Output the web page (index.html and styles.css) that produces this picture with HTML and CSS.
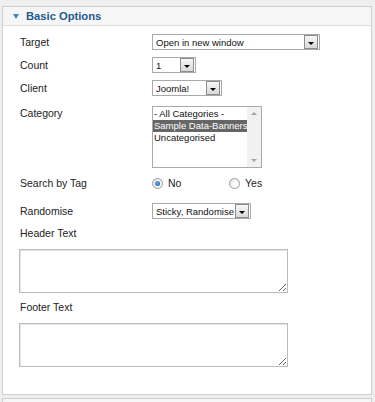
FILE: index.html
```html
<!DOCTYPE html>
<html>
<head>
    <title>Banners Module - Basic Options</title>
    <link rel="stylesheet" href="styles.css">
</head>
<body>
    <div class="panel">
        <h3 class="panel-title"><span class="caret"></span>Basic Options</h3>
        <div class="panel-body">
            <div class="row row-target">
                <label>Target</label>
                <span class="select w-target"><span class="value">Open in new window</span><span class="arrow"></span></span>
            </div>
            <div class="row row-short">
                <label>Count</label>
                <span class="select w-count"><span class="value">1</span><span class="arrow"></span></span>
            </div>
            <div class="row row-short">
                <label>Client</label>
                <span class="select w-client"><span class="value">Joomla!</span><span class="arrow"></span></span>
            </div>
            <div class="row row-category">
                <label class="top">Category</label>
                <div class="listbox">
                    <div class="options">
                        <div class="option">- All Categories -</div>
                        <div class="option selected">Sample Data-Banners</div>
                        <div class="option">Uncategorised</div>
                    </div>
                    <div class="scrollbar">
                        <span class="up"></span>
                        <span class="down"></span>
                    </div>
                </div>
            </div>
            <div class="row row-radio">
                <label>Search by Tag</label>
                <div class="radios">
                    <span class="radio-item no"><span class="radio checked"></span>No</span>
                    <span class="radio-item"><span class="radio"></span>Yes</span>
                </div>
            </div>
            <div class="row row-random">
                <label>Randomise</label>
                <span class="select w-random"><span class="value">Sticky, Randomise</span><span class="arrow"></span></span>
            </div>
            <label class="block-label">Header Text</label>
            <textarea class="text-box"></textarea>
            <label class="block-label">Footer Text</label>
            <textarea class="text-box"></textarea>
        </div>
    </div>
    <div class="panel next">
        <div class="panel-title"></div>
    </div>
</body>
</html>
```

FILE: styles.css
```css
body {
    margin: 0;
    padding: 6px 3px 0 2px;
    background: #efefef;
    font-family: 'Liberation Sans', Arial, sans-serif;
    color: #222;
    height: 402px;
    box-sizing: border-box;
    overflow: hidden;
}
.panel {
    background: #fff;
    border: 1px solid #cfcfcf;
}
.panel.next {
    margin-top: 3px;
    height: 20px;
}
.panel-title {
    margin: 0;
    height: 18px;
    display: flex;
    align-items: center;
    background: #f6f6f6;
    border-bottom: 1px solid #dedede;
    font-size: 11.2px;
    font-weight: bold;
    color: #1d5a93;
}
.caret {
    width: 0;
    height: 0;
    margin: 1px 7px 0 10px;
    border-left: 3.5px solid transparent;
    border-right: 3.5px solid transparent;
    border-top: 5px solid #3a88c6;
}
.panel-body {
    display: flex;
    flex-direction: column;
    align-items: flex-start;
    padding: 0 0 27px 17px;
}
.row {
    display: flex;
    align-items: center;
}
.row label {
    width: 132px;
    font-size: 10.5px;
}
.row label.top {
    align-self: flex-start;
    padding-top: 1px;
}
.row-target { margin-top: 8px; }
.row-short { margin-top: 7px; }
.row-category { margin-top: 10px; }
.row-radio { margin-top: 9px; height: 12px; }
.row-random { margin-top: 14px; }

/* dropdowns */
.select {
    display: inline-flex;
    align-items: center;
    height: 16px;
    box-sizing: border-box;
    border: 1px solid #a9a9a9;
    background: #fff;
    font-size: 9.5px;
    color: #111;
}
.select .value {
    flex: 1;
    padding-left: 3px;
    white-space: nowrap;
    overflow: hidden;
}
.select .arrow {
    width: 12px;
    height: 12px;
    margin-right: 1px;
    border: 1px solid #8c8c8c;
    background: linear-gradient(#f7f7f7, #d9d9d9);
    display: flex;
    align-items: center;
    justify-content: center;
}
.select .arrow::after {
    content: '';
    margin-top: 2px;
    border-left: 3px solid transparent;
    border-right: 3px solid transparent;
    border-top: 3px solid #000;
}
.w-target { width: 168px; }
.w-count { width: 44px; }
.w-client { width: 70px; }
.w-random { width: 99px; }

/* category list */
.listbox {
    display: flex;
    width: 110px;
    height: 62px;
    box-sizing: border-box;
    border: 1px solid #aaa;
    background: #fff;
}
.options {
    flex: 1;
    padding-top: 1px;
    font-size: 9.5px;
    color: #111;
}
.option {
    height: 12px;
    line-height: 12px;
    padding-left: 1px;
    white-space: nowrap;
}
.option.selected {
    background: #666;
    color: #fff;
}
.scrollbar {
    width: 14px;
    background: #f1f1f1;
    display: flex;
    flex-direction: column;
    justify-content: space-between;
    align-items: center;
    padding: 5px 0;
}
.scrollbar span {
    border-left: 3px solid transparent;
    border-right: 3px solid transparent;
}
.scrollbar .up { border-bottom: 3px solid #a3a3a3; }
.scrollbar .down { border-top: 3px solid #a3a3a3; }

/* radios */
.radios {
    display: flex;
    align-items: center;
    font-size: 10.5px;
}
.radio-item {
    display: flex;
    align-items: center;
    gap: 5px;
}
.radio-item.no {
    width: 77px;
}
.radio {
    width: 11px;
    height: 11px;
    box-sizing: border-box;
    border-radius: 50%;
    border: 1px solid #9c9c9c;
    background: radial-gradient(circle at 60% 60%, #fff 20%, #dcdcdc 100%);
    display: flex;
    align-items: center;
    justify-content: center;
}
.radio.checked::after {
    content: '';
    width: 5px;
    height: 5px;
    border-radius: 50%;
    background: radial-gradient(circle at 40% 40%, #6fb0ea, #114f98);
}

/* text areas */
.block-label {
    margin-top: 8px;
    height: 13px;
    line-height: 13px;
    font-size: 10.5px;
}
.text-box {
    margin: 9px 0 0 -1px;
    width: 269px;
    height: 44px;
    box-sizing: border-box;
    border: 1px solid #bcbcbc;
    box-shadow: inset 1px 1px 0 #e4e4e4;
    background: #fff;
    padding: 0;
}
```
